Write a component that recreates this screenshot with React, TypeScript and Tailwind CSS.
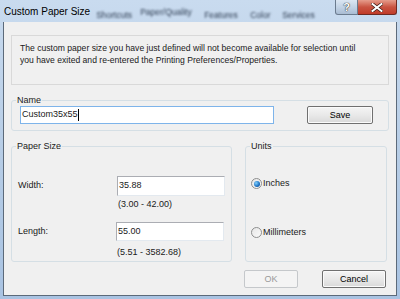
import React from "react";

const font = { fontFamily: '"Liberation Sans", Arial, sans-serif' };

const tabs = [
  { label: "Shortcuts", cls: "w-[38px]" },
  { label: "Paper/Quality", cls: "w-[58px] -mt-[3px]" },
  { label: "Features", cls: "w-[40px]" },
  { label: "Color", cls: "w-[26px]" },
  { label: "Services", cls: "w-[38px]" },
];

const Button = ({ label, w, disabled }: { label: string; w: string; disabled?: boolean }) => (
  <button
    className={`${w} h-[18px] rounded-[2px] border text-[9px] leading-none ${
      disabled
        ? "border-[#c5c8cb] bg-[#f4f4f4] text-[#9a9a9a]"
        : "border-[#707070] bg-gradient-to-b from-[#f5f5f5] via-[#e9e9e9] to-[#d9d9d9] text-black shadow-[inset_0_0_0_1px_#fbfbfb]"
    }`}
  >
    {label}
  </button>
);

const Radio = ({ checked, label }: { checked?: boolean; label: string }) => (
  <div className="flex items-center gap-[1px] h-[11px]">
    <span className="w-[11px] h-[11px] rounded-full border border-[#8e8f8f] bg-gradient-to-br from-[#e6e6e6] to-[#fafafa] flex items-center justify-center">
      {checked && (
        <span className="w-[6px] h-[6px] rounded-full bg-[radial-gradient(circle_at_35%_35%,#7fd0ff,#1b6fc0_60%,#0c3f7a)]" />
      )}
    </span>
    <span className="text-[9px] text-[#1a1a1a]">{label}</span>
  </div>
);

export default function App() {
  return (
    <div
      style={font}
      className="w-[400px] h-[299px] flex flex-col bg-gradient-to-b from-[#c9dbef] via-[#b7cde6] to-[#a9c3e2] overflow-hidden"
    >
      {/* title bar */}
      <div className="h-[22px] flex items-start">
        <div className="pl-[4px] pt-[7px] text-[10px] text-black leading-none whitespace-nowrap">
          Custom Paper Size
        </div>
        <div className="flex items-start gap-[6px] ml-[6px] pt-[9px] blur-[1px] text-[8.5px] text-[#2c3b50] whitespace-nowrap">
          {tabs.map((t) => (
            <span key={t.label} className={`${t.cls} overflow-hidden`}>
              {t.label}
            </span>
          ))}
        </div>
        <div className="ml-auto mr-[3px] flex">
          <div className="w-[23px] h-[15px] rounded-bl-[3px] border border-[#6b7b8e] border-t-0 bg-gradient-to-b from-[#dbe6f2] via-[#c3d3e5] to-[#a9bcd3] flex items-center justify-center text-[11px] font-bold text-white [text-shadow:0_0_1px_#222,0_0_1px_#222]">
            ?
          </div>
          <div className="w-[39px] h-[15px] rounded-br-[3px] border border-l-0 border-t-0 border-[#6e2a22] bg-gradient-to-b from-[#e59c8c] via-[#c95442] to-[#c03a28] flex items-center justify-center">
            <svg width="12" height="9" viewBox="0 0 12 9">
              <path d="M1.5 1 L10.5 8 M10.5 1 L1.5 8" stroke="#3b1a14" strokeWidth="3.4" strokeLinecap="square" />
              <path d="M1.5 1 L10.5 8 M10.5 1 L1.5 8" stroke="#ffffff" strokeWidth="2" strokeLinecap="square" />
            </svg>
          </div>
        </div>
      </div>

      {/* client area */}
      <div className="mx-[3px] h-[274px] border border-t-0 border-[#5c6a7a] bg-[#f0f0f0] pl-[7px] pr-[7px] pt-[13px] text-[#1a1a1a]">
        <div className="h-[50px] border border-[#d9d9d9] pl-[8px] pt-[6px] text-[8.6px] leading-[12px]">
          <p>The custom paper size you have just defined will not become available for selection until</p>
          <p>you have exited and re-entered the Printing Preferences/Properties.</p>
        </div>

        <fieldset className="mt-[10px] border border-[#d5dfe5] rounded-[3px] pl-[8px] pr-[15px] pb-[5px] h-[36px]">
          <legend className="-ml-[4px] px-[1px] text-[9px] leading-[11px]">Name</legend>
          <div className="flex items-center justify-between">
            <div className="w-[254px] h-[18px] border border-[#7eb4ea] bg-white flex items-center pl-[1px] text-[9px]">
              Custom35x55
              <span className="w-px h-[12px] bg-black" />
            </div>
            <Button label="Save" w="w-[66px]" />
          </div>
        </fieldset>

        <div className="mt-[10px] flex gap-[13px] h-[121px]">
          <fieldset className="w-[221px] border border-[#d5dfe5] rounded-[3px] pl-[6px]">
            <legend className="-ml-[2px] px-[1px] text-[9px] leading-[11px]">Paper Size</legend>
            <div className="mt-[24px] flex items-center">
              <span className="w-[99px] text-[9px]">Width:</span>
              <div className="w-[108px] h-[20px] border border-[#abadb3] border-b-[#e3e9ef] border-r-[#e3e9ef] bg-white flex items-center pl-[1px] text-[9px]">
                35.88
              </div>
            </div>
            <div className="mt-[3px] ml-[100px] text-[9px] leading-[11px]">(3.00 - 42.00)</div>
            <div className="mt-[12px] flex items-center">
              <span className="w-[98px] text-[9px]">Length:</span>
              <div className="w-[108px] h-[19px] border border-[#abadb3] border-b-[#e3e9ef] border-r-[#e3e9ef] bg-white flex items-center pl-[1px] text-[9px]">
                55.00
              </div>
            </div>
            <div className="mt-[6px] ml-[99px] text-[9px] leading-[11px]">(5.51 - 3582.68)</div>
          </fieldset>

          <fieldset className="w-[142px] border border-[#d5dfe5] rounded-[3px] pl-[5px]">
            <legend className="-ml-[1px] px-[1px] text-[9px] leading-[11px]">Units</legend>
            <div className="mt-[26px]">
              <Radio checked label="Inches" />
            </div>
            <div className="mt-[38px]">
              <Radio label="Millimeters" />
            </div>
          </fieldset>
        </div>

        <div className="mt-[8px] flex justify-end gap-[24px] pr-[3px]">
          <Button label="OK" w="w-[54px]" disabled />
          <Button label="Cancel" w="w-[64px]" />
        </div>
      </div>
    </div>
  );
}
